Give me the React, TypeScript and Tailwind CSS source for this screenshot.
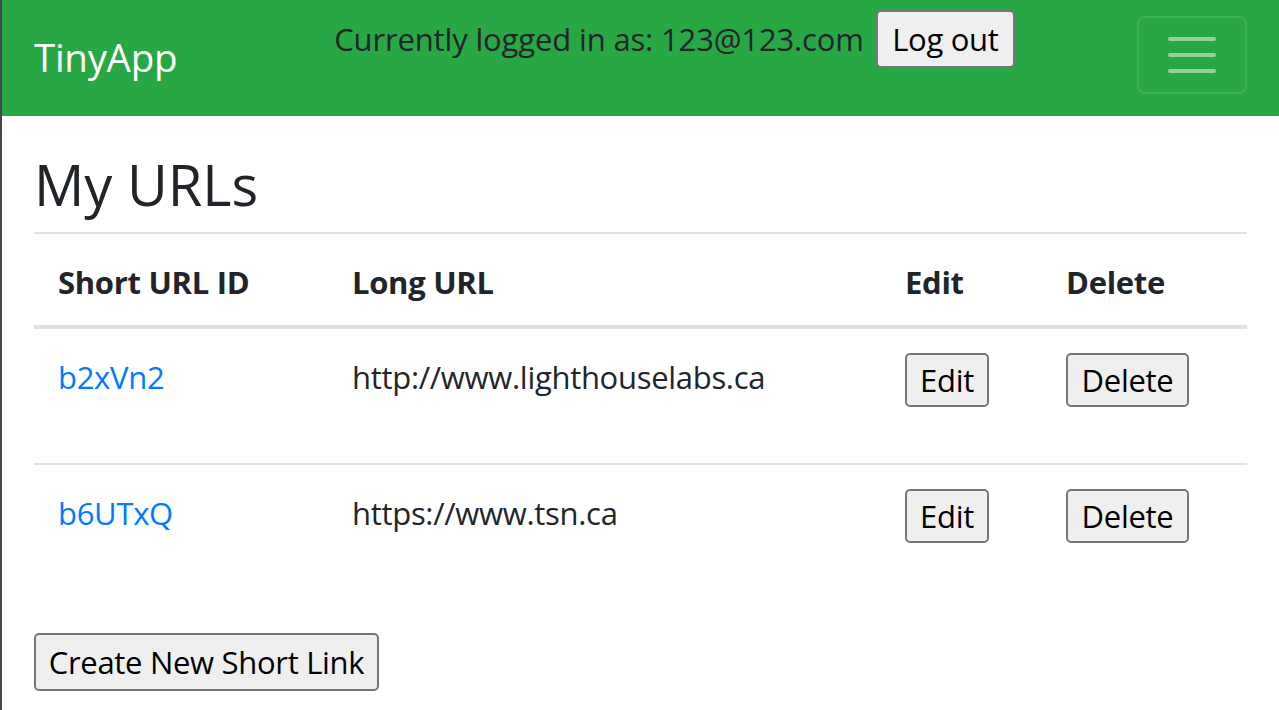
const urls = [
  { id: 'b2xVn2', long: 'http://www.lighthouselabs.ca' },
  { id: 'b6UTxQ', long: 'https://www.tsn.ca' },
]

const btn =
  'flex items-center justify-center bg-[#efefef] border-2 border-[#767676] rounded-[5px] text-black text-[31px] leading-none tracking-[-0.3px]'

const App = () => {
  return (
    <div
      className="min-h-screen bg-white border-l-2 border-[#4b444b] text-[#212529] text-[31px] tracking-[-0.3px]"
      style={{ fontFamily: '"Open Sans", "Noto Sans", sans-serif' }}
    >
      <nav className="flex h-[116px] bg-[#28a745] px-[32px]">
        <a href="#" className="mt-[27px] h-[60px] text-[38.5px] leading-[60px] text-white">
          TinyApp
        </a>
        <div className="ml-[157px] mt-[10px] flex h-[58px] items-center gap-[12px]">
          <span className="leading-[48px] tracking-[-0.15px]">Currently logged in as: 123@123.com</span>
          <button className={`${btn} h-[58px] w-[139px]`}>Log out</button>
        </div>
        <button className="ml-auto mt-[16px] flex h-[78px] w-[110px] flex-col items-center justify-center gap-[12px] rounded-[8px] border-2 border-white/10">
          <span className="h-[4px] w-[48px] rounded-full bg-white/50" />
          <span className="h-[4px] w-[48px] rounded-full bg-white/50" />
          <span className="h-[4px] w-[48px] rounded-full bg-white/50" />
        </button>
      </nav>

      <main className="px-[32px]">
        <h1 className="pt-[32px] pb-[12px] text-[56px] font-medium leading-[72px] tracking-normal">My URLs</h1>
        <table className="w-full border-collapse">
          <thead>
            <tr>
              <th className="w-[294px] border-t-2 border-b-4 border-[#dee2e6] px-[24px] pt-[24px] pb-[19px] text-left font-bold leading-[48px]">
                Short URL ID
              </th>
              <th className="w-[553px] border-t-2 border-b-4 border-[#dee2e6] px-[24px] pt-[24px] pb-[19px] text-left font-bold leading-[48px]">
                Long URL
              </th>
              <th className="w-[161px] border-t-2 border-b-4 border-[#dee2e6] px-[24px] pt-[24px] pb-[19px] text-left font-bold leading-[48px]">
                Edit
              </th>
              <th className="border-t-2 border-b-4 border-[#dee2e6] px-[24px] pt-[24px] pb-[19px] text-left font-bold leading-[48px]">
                Delete
              </th>
            </tr>
          </thead>
          <tbody>
            {urls.map((url) => (
              <tr key={url.id} className="border-t-2 border-[#dee2e6]">
                <td className="p-[24px] align-top leading-[48px]">
                  <a href="#" className="text-[#007bff]">
                    {url.id}
                  </a>
                </td>
                <td className="p-[24px] align-top leading-[48px]">{url.long}</td>
                <td className="p-[24px] align-top">
                  <form className="mb-[32px]">
                    <button type="button" className={`${btn} h-[54px] w-[84px]`}>
                      Edit
                    </button>
                  </form>
                </td>
                <td className="p-[24px] align-top">
                  <form className="mb-[32px]">
                    <button type="button" className={`${btn} h-[54px] w-[123px]`}>
                      Delete
                    </button>
                  </form>
                </td>
              </tr>
            ))}
          </tbody>
        </table>
        <button className={`${btn} mt-[34px] h-[58px] w-[345px]`}>Create New Short Link</button>
      </main>
    </div>
  )
}

export default App
